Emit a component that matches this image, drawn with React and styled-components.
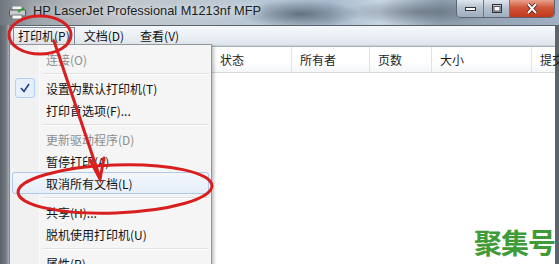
import React from "react";
import styled, { createGlobalStyle } from "styled-components";

const GlobalStyle = createGlobalStyle`
  html, body {
    margin: 0;
    padding: 0;
    overflow: hidden;
  }
  body {
    font-family: "Noto Sans CJK SC", "Liberation Sans", sans-serif;
  }
`;

const cjk = `"Noto Sans CJK SC", "Noto Sans", sans-serif`;

const Window = styled.div`
  position: relative;
  width: 559px;
  height: 264px;
  overflow: hidden;
  display: flex;
  flex-direction: column;
  background: linear-gradient(90deg, #5d646c 0px, #737a82 6px, #a9b1ba 9px, #5d646c 10px);
`;

const TitleBar = styled.div`
  height: 25px;
  flex-shrink: 0;
  display: flex;
  align-items: flex-start;
  background:
    radial-gradient(ellipse 60px 14px at 300px 14px, rgba(40, 50, 60, 0.55), transparent),
    radial-gradient(ellipse 80px 12px at 420px 12px, rgba(60, 70, 80, 0.45), transparent),
    linear-gradient(90deg, #6f767d 0px, #9aa1a8 30px, #c2c7cc 120px, #b7c7d6 260px, #a6b9cc 330px, #c7d5e2 380px, #8d9dad 440px, #9fb0c2 560px);
`;

const AppIcon = styled.svg`
  margin: 6px 0 0 9px;
  flex-shrink: 0;
`;

const Title = styled.div`
  margin: 3px 0 0 7px;
  font-family: "Liberation Sans", sans-serif;
  font-size: 12.8px;
  color: #1b1f24;
  text-shadow: 0 0 6px rgba(255, 255, 255, 0.9);
  white-space: nowrap;
`;

const Controls = styled.div`
  margin-left: auto;
  margin-right: 4px;
  display: flex;
  height: 17px;
  border: 1px solid #5c6570;
  border-top: none;
  border-radius: 0 0 5px 5px;
  overflow: hidden;
`;

const CtrlButton = styled.div`
  width: ${(p) => p.$w}px;
  display: flex;
  align-items: center;
  justify-content: center;
  border-left: ${(p) => (p.$first ? "none" : "1px solid #6d7782")};
  background: ${(p) =>
    p.$close
      ? "linear-gradient(180deg, #e9a28f 0%, #d0553a 45%, #c1381c 100%)"
      : "linear-gradient(180deg, #dfe6ee 0%, #b5c2d0 45%, #9eaebf 100%)"};
`;

const Body = styled.div`
  flex: 1;
  display: flex;
  flex-direction: column;
  margin: 0 4px 0 10px;
  background: #ffffff;
`;

const MenuBar = styled.div`
  height: 19px;
  display: flex;
  align-items: center;
  padding-left: 3px;
  border-top: 1px solid #59626c;
  background: linear-gradient(180deg, #f5f8fb 0%, #e9eef4 60%, #dde4ec 100%);
  border-bottom: 1px solid #c9d1da;
`;

const MenuItem = styled.div`
  font-family: ${cjk};
  font-size: 12px;
  color: #111;
  height: 16px;
  line-height: 16px;
  padding: 0 4px;
  margin-right: ${(p) => p.$mr || 0}px;
  border: 1px solid ${(p) => (p.$active ? "#7e8a97" : "transparent")};
  background: ${(p) => (p.$active ? "linear-gradient(180deg, #f3f5f7, #dfe3e8)" : "transparent")};
`;

const ListView = styled.div`
  flex: 1;
  display: flex;
  flex-direction: column;
  border-top: 1px solid #a8b3c0;
  border-left: 1px solid #828a93;
`;

const HeaderRow = styled.div`
  height: 25px;
  display: flex;
  padding-left: 201px;
  background: linear-gradient(180deg, #ffffff 0%, #ffffff 60%, #f4f6f8 100%);
  border-bottom: 1px solid #d5d8dc;
`;

const HeaderCell = styled.div`
  width: ${(p) => p.$w}px;
  flex-shrink: 0;
  font-family: ${cjk};
  font-size: 12px;
  color: #1e1e1e;
  line-height: 25px;
  padding-left: 8px;
  box-sizing: border-box;
  border-right: 1px solid #dfe2e6;
  white-space: nowrap;
  overflow: hidden;
`;

const Dropdown = styled.div`
  position: absolute;
  left: 10px;
  top: 44px;
  width: 202px;
  height: 240px;
  box-sizing: border-box;
  padding: 3px 2px 0 2px;
  background: linear-gradient(90deg, #f1f1f1 0px, #f1f1f1 28px, #e2e3e3 28px, #ffffff 29px, #f5f5f5 30px);
  border: 1px solid #979797;
  border-left: none;
  box-shadow: 2px 2px 3px rgba(0, 0, 0, 0.25);
  display: flex;
  flex-direction: column;
`;

const DropItem = styled.div`
  position: relative;
  height: 22px;
  box-sizing: border-box;
  flex-shrink: 0;
  display: flex;
  align-items: center;
  padding-left: 33px;
  font-family: ${cjk};
  font-size: 12px;
  color: ${(p) => (p.$disabled ? "#8d8d8d" : "#111")};
  border: 1px solid ${(p) => (p.$hot ? "#b0c9ea" : "transparent")};
  border-radius: 3px;
  background: ${(p) => (p.$hot ? "linear-gradient(180deg, #f3f7fc 0%, #e6eef9 100%)" : "transparent")};
  white-space: nowrap;
`;

const Separator = styled.div`
  height: 7px;
  flex-shrink: 0;
  display: flex;
  align-items: center;
  padding-left: 31px;
  &::after {
    content: "";
    flex: 1;
    height: 1px;
    background: #e0e0e0;
    border-bottom: 1px solid #ffffff;
  }
`;

const CheckBox = styled.div`
  position: absolute;
  left: 2px;
  top: 0px;
  width: 20px;
  height: 20px;
  box-sizing: border-box;
  border: 1px solid #aecff7;
  border-radius: 3px;
  background: #e6effb;
  display: flex;
  align-items: center;
  justify-content: center;
`;

const Overlay = styled.svg`
  position: absolute;
  left: 0;
  top: 0;
  pointer-events: none;
`;

const Watermark = styled.div`
  position: absolute;
  right: 4px;
  bottom: 8px;
  font-family: ${cjk};
  font-weight: 700;
  font-size: 28px;
  letter-spacing: -1px;
  color: #3e9b35;
  line-height: 1;
`;

const columns = [
  { label: "状态", w: 80 },
  { label: "所有者", w: 78 },
  { label: "页数", w: 62 },
  { label: "大小", w: 100 },
  { label: "提交", w: 80 },
];

const items = [
  { label: "连接(O)", disabled: true },
  { sep: true },
  { label: "设置为默认打印机(T)", checked: true },
  { label: "打印首选项(F)..." },
  { sep: true },
  { label: "更新驱动程序(D)", disabled: true },
  { label: "暂停打印(A)" },
  { label: "取消所有文档(L)", hot: true },
  { sep: true },
  { label: "共享(H)..." },
  { label: "脱机使用打印机(U)" },
  { sep: true },
  { label: "属性(R)" },
];

export default function App() {
  return (
    <Window>
      <GlobalStyle />
      <TitleBar>
        <AppIcon width="17" height="13" viewBox="0 0 17 13">
          <rect x="3" y="0" width="10" height="4" fill="#f4f4f4" stroke="#888" />
          <rect x="0.5" y="4" width="16" height="6" rx="1" fill="#c9cdd1" stroke="#555" />
          <rect x="3" y="9" width="10" height="4" fill="#ffffff" stroke="#777" />
          <path d="M9 6 L15 2" stroke="#2fa12f" strokeWidth="2" />
        </AppIcon>
        <Title>HP LaserJet Professional M1213nf MFP</Title>
        <Controls>
          <CtrlButton $w={26} $first>
            <svg width="11" height="4"><rect x="0.5" y="0.5" width="10" height="3" fill="#fff" stroke="#333" /></svg>
          </CtrlButton>
          <CtrlButton $w={25}>
            <svg width="10" height="9"><rect x="0.5" y="0.5" width="9" height="8" fill="none" stroke="#333" /><rect x="2" y="2.5" width="6" height="4.5" fill="#fff" stroke="#333" strokeWidth="0.8" /></svg>
          </CtrlButton>
          <CtrlButton $w={44} $close>
            <svg width="12" height="11" viewBox="0 0 12 11">
              <path d="M2 1 L10 10 M10 1 L2 10" stroke="#3a1a14" strokeWidth="3.4" />
              <path d="M2 1 L10 10 M10 1 L2 10" stroke="#ffffff" strokeWidth="2" />
            </svg>
          </CtrlButton>
        </Controls>
      </TitleBar>
      <Body>
        <MenuBar>
          <MenuItem $active $mr={4}>打印机(P)</MenuItem>
          <MenuItem $mr={6}>文档(D)</MenuItem>
          <MenuItem>查看(V)</MenuItem>
        </MenuBar>
        <ListView>
          <HeaderRow>
            {columns.map((c) => (
              <HeaderCell key={c.label} $w={c.w}>{c.label}</HeaderCell>
            ))}
          </HeaderRow>
        </ListView>
      </Body>

      <Dropdown>
        {items.map((it, i) =>
          it.sep ? (
            <Separator key={i} />
          ) : (
            <DropItem key={i} $disabled={it.disabled} $hot={it.hot}>
              {it.checked && (
                <CheckBox>
                  <svg width="10" height="10" viewBox="0 0 10 10">
                    <path d="M1 5 L4 8.5 L9 1" fill="none" stroke="#1d3e8a" strokeWidth="1.6" />
                  </svg>
                </CheckBox>
              )}
              {it.label}
            </DropItem>
          )
        )}
      </Dropdown>

      <Watermark>聚集号</Watermark>

      <Overlay width="559" height="264" viewBox="0 0 559 264">
        <g fill="none" stroke="#d81e1e" strokeWidth="3" strokeLinecap="round">
          <ellipse cx="40" cy="35" rx="31" ry="19" />
          <path d="M54 41 L100 178" />
          <path d="M90 160 L100 179 L104 158" />
          <ellipse cx="115" cy="189" rx="97" ry="24" transform="rotate(-2 115 189)" />
        </g>
      </Overlay>
    </Window>
  );
}
